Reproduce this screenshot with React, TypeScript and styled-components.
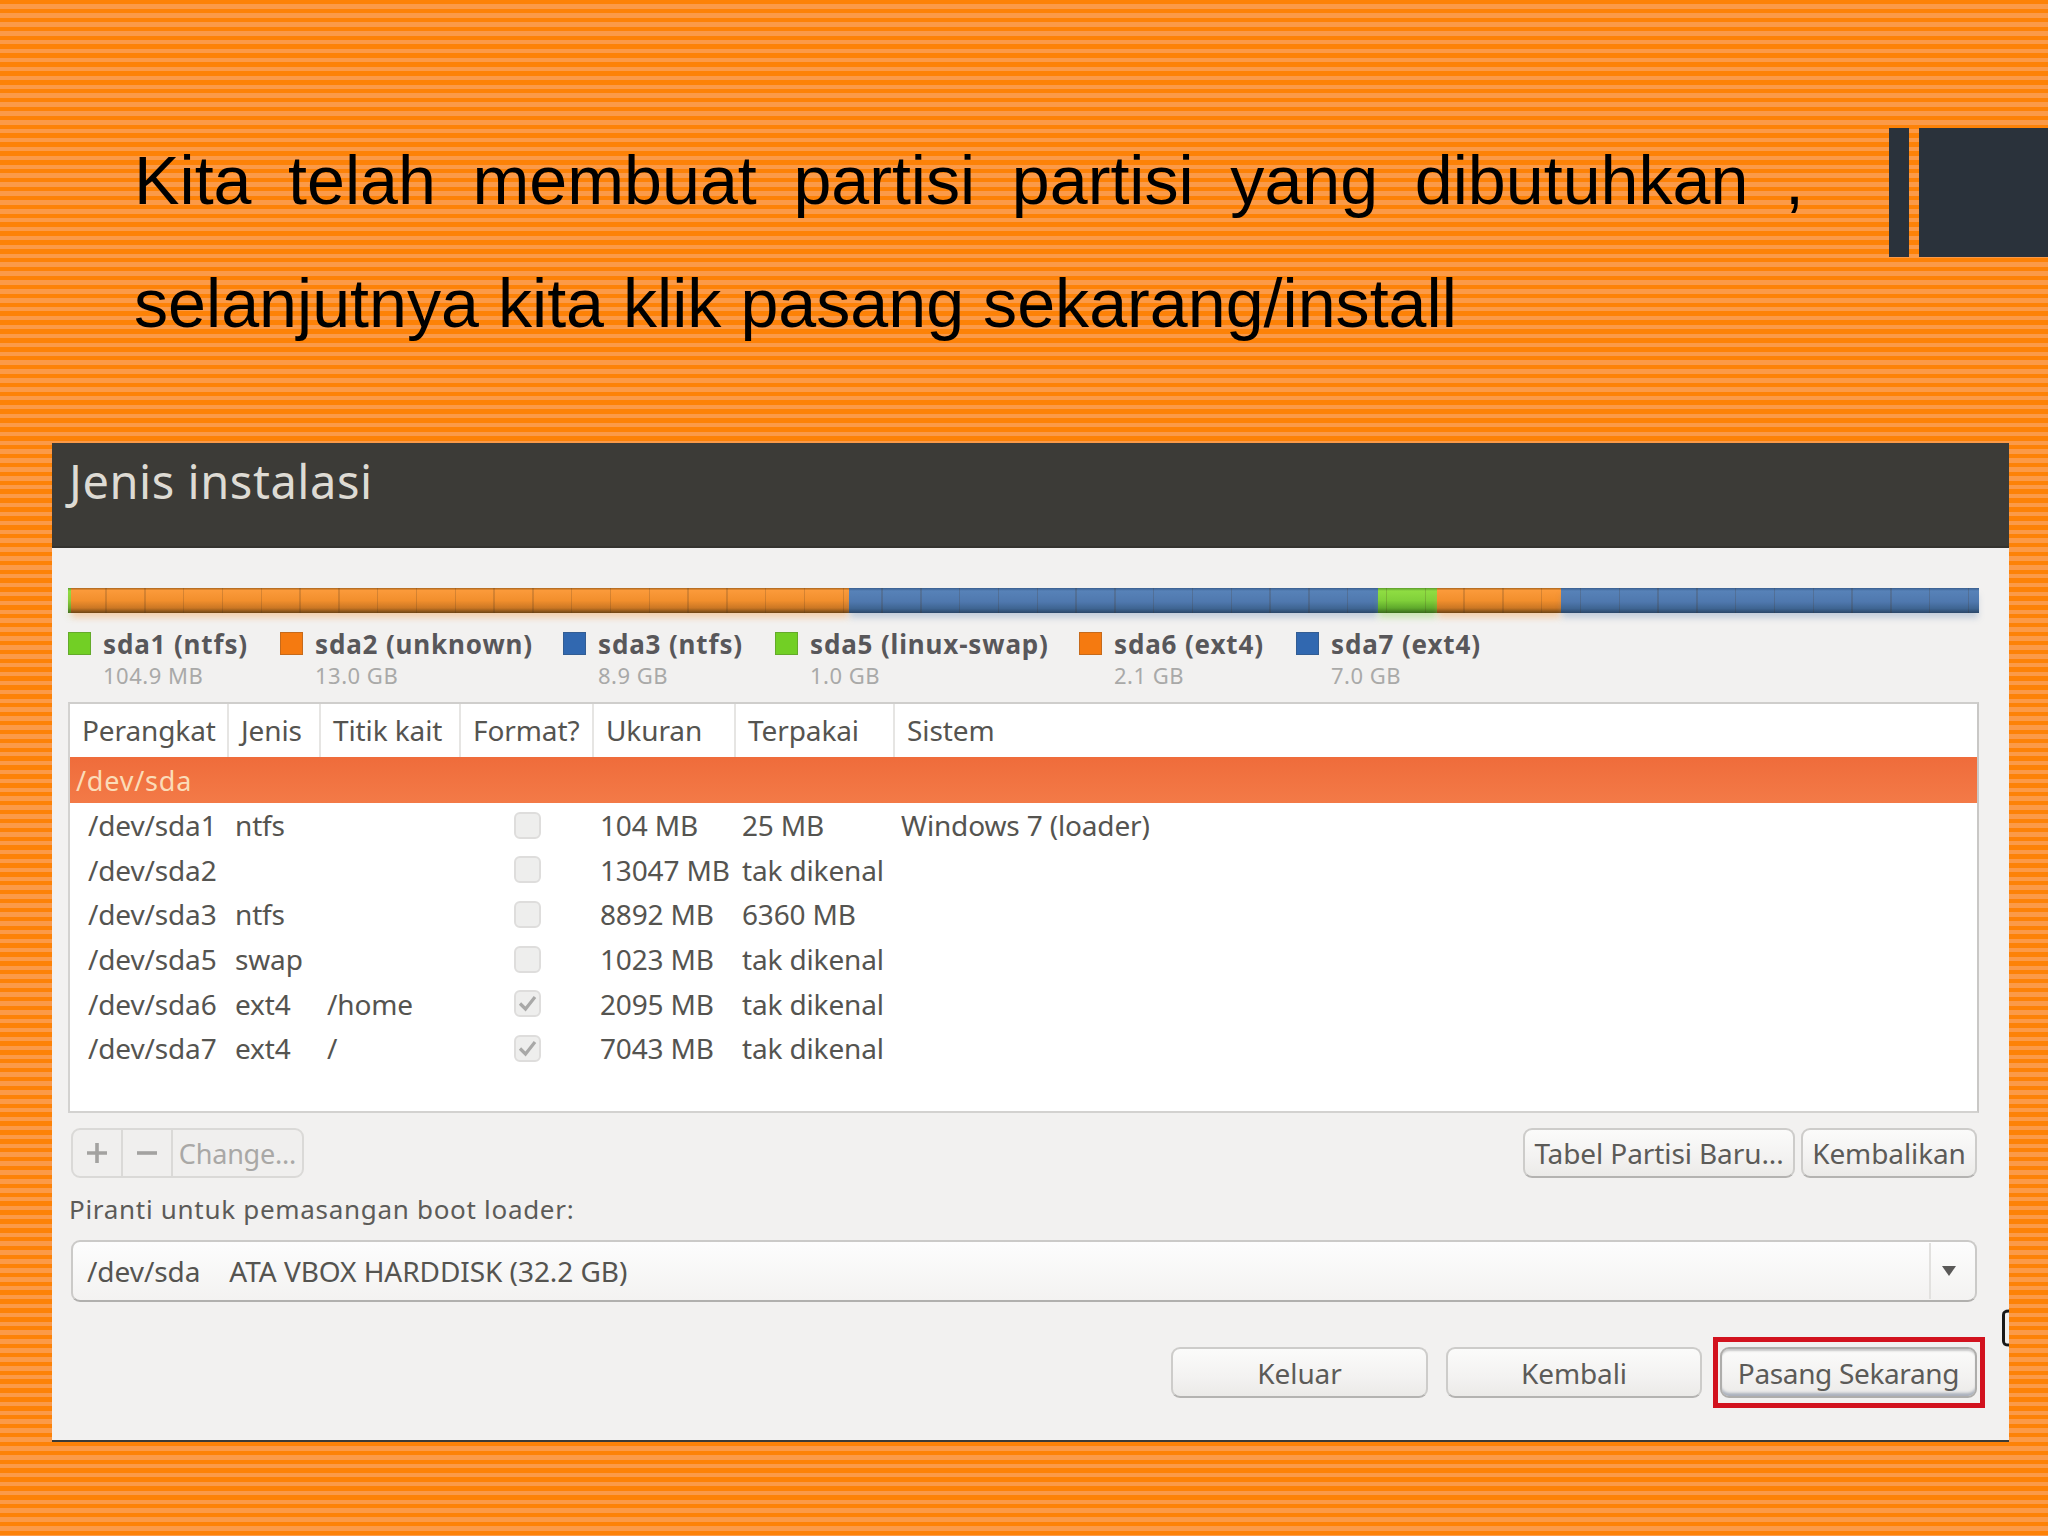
import React from "react";
import styled, { createGlobalStyle } from "styled-components";

const Global = createGlobalStyle`
  html, body { margin: 0; padding: 0; }
  body { width: 2048px; height: 1536px; overflow: hidden; }
`;

const Slide = styled.div`
  width: 2048px;
  height: 1536px;
  display: flex;
  flex-direction: column;
  background: repeating-linear-gradient(180deg, #fd8207 0, #fd8207 4.4px, #fb9a48 4.4px, #fb9a48 8.9px);
`;

const Header = styled.header`
  height: 443px;
  flex: none;
  display: flex;
  align-items: flex-start;
`;

const Title = styled.h1`
  margin: 119px 0 0 134px;
  width: 1670px;
  flex: none;
  font: 400 68.2px/123px "Liberation Sans", Arial, sans-serif;
  color: #000;
  text-align: justify;
`;

const Decor = styled.div`
  margin: 128px 0 0 85px;
  display: flex;
  gap: 10px;
  flex: 1;
`;

const DecorBlock = styled.div<{ $w: number }>`
  flex: ${(p) => (p.$w ? `0 0 ${p.$w}px` : "1")};
  height: 129px;
  background: #2a323b;
`;

const Window = styled.section`
  position: relative;
  margin-left: 52px;
  width: 1957px;
  height: 999px;
  display: flex;
  flex-direction: column;
  background: #f2f1f0;
  border-bottom: 2px solid #3c3b37;
  box-sizing: border-box;
  font-family: "Noto Sans", sans-serif;
  color: #555450;
`;

const WindowHead = styled.div`
  height: 105px;
  flex: none;
  box-sizing: border-box;
  padding: 6px 0 0 17px;
  background: #3c3b37;
  border-bottom: 2px solid #34332f;
  color: #dedbd4;
  font-size: 47px;
  line-height: 64px;
  letter-spacing: 0.55px;
`;

const WindowBody = styled.div`
  flex: 1;
  padding: 40px 30px 0 16px;
  display: flex;
  flex-direction: column;
`;

const Bar = styled.div`
  position: relative;
  width: 1911px;
  height: 25px;
  display: flex;
  flex: none;
  &::after {
    content: "";
    position: absolute;
    inset: 0;
    background: repeating-linear-gradient(90deg, transparent 0, transparent 37.3px, rgba(70, 50, 30, 0.2) 37.3px, rgba(70, 50, 30, 0.2) 38.8px);
  }
`;

const Segment = styled.div<{ $w: number; $kind: string }>`
  flex: 0 0 ${(p) => p.$w}px;
  background: ${(p) =>
    p.$kind === "o"
      ? "linear-gradient(180deg, #a9651f 0, #fb9a3a 10%, #f28f2d 50%, #cb7724 80%, #6e4414 100%)"
      : p.$kind === "b"
      ? "linear-gradient(180deg, #3a5f8f 0, #5782b8 12%, #4f78ae 55%, #3f6592 82%, #2a4668 100%)"
      : "linear-gradient(180deg, #5c9c2c 0, #8fdd42 12%, #80d03a 50%, #5faa2c 80%, #3a6c1c 100%)"};
  box-shadow: 0 6px 6px -1px ${(p) =>
    p.$kind === "o"
      ? "rgba(245, 160, 80, 0.4)"
      : p.$kind === "b"
      ? "rgba(110, 140, 180, 0.35)"
      : "rgba(130, 210, 70, 0.35)"};
`;

const Legend = styled.div`
  display: grid;
  grid-template-columns: 212px 283px 212px 304px 217px auto;
  margin-top: 19px;
  height: 71px;
  flex: none;
`;

const LegendItem = styled.div`
  display: grid;
  grid-template-columns: 24px auto;
  column-gap: 11px;
  align-content: start;
`;

const Swatch = styled.span<{ $c: string }>`
  width: 23px;
  height: 23px;
  box-sizing: border-box;
  background: ${(p) => p.$c};
  border: 1px solid rgba(60, 60, 60, 0.25);
`;

const LegendName = styled.span`
  font-size: 26px;
  font-weight: 700;
  line-height: 25px;
  letter-spacing: 0.85px;
  color: #58575a;
  white-space: nowrap;
`;

const LegendSize = styled.span`
  grid-column: 2;
  font-size: 22px;
  line-height: 36px;
  letter-spacing: 0.5px;
  color: #a9a9a8;
`;

const Table = styled.div`
  width: 1911px;
  height: 411px;
  flex: none;
  box-sizing: border-box;
  margin-top: -1px;
  background: #fff;
  border: 2px solid #d3d2d0;
  border-right-color: #c9c8c6;
  border-top-color: #cfcecc;
`;

const columns = "159px 92px 140px 133px 142px 159px 1fr";

const HeadRow = styled.div`
  height: 53px;
  display: grid;
  grid-template-columns: ${columns};
  background: #fff;
`;

const HeadCell = styled.div`
  padding-left: 12px;
  font-size: 28px;
  line-height: 52px;
  letter-spacing: -0.1px;
  white-space: nowrap;
  border-right: 2px solid #e6e5e3;
  &:last-child { border-right: 0; }
`;

const DiskRow = styled.div`
  height: 46px;
  padding-left: 6px;
  box-sizing: border-box;
  background: linear-gradient(180deg, #ef6c3b 0, #f37a47 100%);
  color: #fbdcb8;
  font-size: 27px;
  line-height: 47px;
  letter-spacing: 0.8px;
`;

const Row = styled.div`
  height: 44.6px;
  display: grid;
  grid-template-columns: ${columns};
  align-items: center;
  font-size: 28px;
  letter-spacing: -0.15px;
  color: #555450;
`;

const Cell = styled.div`
  padding-left: 6px;
  white-space: nowrap;
  &:first-child { padding-left: 18px; }
`;

const CheckCell = styled.div`
  display: flex;
  justify-content: center;
`;

const Check = styled.span`
  width: 27px;
  height: 27px;
  box-sizing: border-box;
  display: flex;
  align-items: center;
  justify-content: center;
  border: 2px solid #dedddc;
  border-radius: 6px;
  background: #eeeeed;
`;

const ToolRow = styled.div`
  display: flex;
  justify-content: space-between;
  align-items: center;
  height: 50px;
  flex: none;
  margin: 15px 2px 0 3px;
`;

const Segmented = styled.div`
  display: flex;
  height: 50px;
  box-sizing: border-box;
  border: 2px solid #dad9d7;
  border-radius: 9px;
  background: #f0efee;
`;

const SegBtn = styled.div<{ $w: number }>`
  width: ${(p) => p.$w}px;
  box-sizing: border-box;
  display: flex;
  align-items: center;
  justify-content: center;
  font-size: 27px;
  letter-spacing: -0.2px;
  color: #a9a8a6;
  border-right: 2px solid #dad9d7;
  &:last-child { border-right: 0; }
`;

const ToolGroup = styled.div`
  display: flex;
  gap: 6px;
`;

const Button = styled.div<{ $w: number; $h?: number }>`
  width: ${(p) => p.$w}px;
  height: ${(p) => p.$h || 50}px;
  box-sizing: border-box;
  display: flex;
  align-items: center;
  justify-content: center;
  white-space: nowrap;
  font-size: 28px;
  letter-spacing: -0.1px;
  color: #5c5b58;
  border: 2px solid #cdccca;
  border-bottom-color: #b4b3b1;
  border-radius: 9px;
  background: linear-gradient(180deg, #fbfbfa 0, #f3f2f1 60%, #ebeae8 100%);
`;

const DefaultButton = styled(Button)`
  position: relative;
  letter-spacing: -0.35px;
  border-color: #aeadab;
  box-shadow: inset 0 -5px 3px -2px #a9afbb, inset 0 3px 2px -1px #c8c8c8;
  &::after {
    content: "";
    position: absolute;
    left: -9px;
    top: -12px;
    width: 272px;
    height: 71px;
    box-sizing: border-box;
    border: 5px solid #d2121e;
  }
`;

const BootLabel = styled.div`
  margin: 16px 0 0 1px;
  height: 31px;
  flex: none;
  font-size: 26px;
  line-height: 31px;
  letter-spacing: 0.7px;
  color: #5c5b58;
`;

const Select = styled.div`
  margin: 15px 2px 0 3px;
  height: 62px;
  flex: none;
  box-sizing: border-box;
  display: flex;
  align-items: center;
  border: 2px solid #cbcac8;
  border-bottom-color: #b1b0ae;
  border-radius: 9px;
  background: linear-gradient(180deg, #fdfdfd 0, #f3f2f1 100%);
  font-size: 28px;
  letter-spacing: -0.05px;
  color: #555450;
`;

const SelectValue = styled.div`
  flex: 1;
  padding-left: 14px;
  white-space: pre;
`;

const SelectArrow = styled.div`
  width: 46px;
  height: 56px;
  box-sizing: border-box;
  padding-right: 8px;
  display: flex;
  align-items: center;
  justify-content: center;
  border-left: 2px solid #e2e1df;
  color: #5a5958;
`;

const ActionRow = styled.div`
  margin: 45px 2px 0 0;
  display: flex;
  justify-content: flex-end;
  gap: 18px;
`;

const Cursor = styled.svg`
  position: absolute;
  left: 1947px;
  top: 866px;
`;

const legend = [
  { c: "#72cf25", n: "sda1 (ntfs)", s: "104.9 MB" },
  { c: "#f57a10", n: "sda2 (unknown)", s: "13.0 GB" },
  { c: "#3168b0", n: "sda3 (ntfs)", s: "8.9 GB" },
  { c: "#72cf25", n: "sda5 (linux-swap)", s: "1.0 GB" },
  { c: "#f57a10", n: "sda6 (ext4)", s: "2.1 GB" },
  { c: "#3168b0", n: "sda7 (ext4)", s: "7.0 GB" },
];

const segments = [
  { w: 3, k: "g" },
  { w: 778, k: "o" },
  { w: 529, k: "b" },
  { w: 59, k: "g" },
  { w: 124, k: "o" },
  { w: 418, k: "b" },
];

const heads = ["Perangkat", "Jenis", "Titik kait", "Format?", "Ukuran", "Terpakai", "Sistem"];

const rows = [
  ["/dev/sda1", "ntfs", "", false, "104 MB", "25 MB", "Windows 7 (loader)"],
  ["/dev/sda2", "", "", false, "13047 MB", "tak dikenal", ""],
  ["/dev/sda3", "ntfs", "", false, "8892 MB", "6360 MB", ""],
  ["/dev/sda5", "swap", "", false, "1023 MB", "tak dikenal", ""],
  ["/dev/sda6", "ext4", "/home", true, "2095 MB", "tak dikenal", ""],
  ["/dev/sda7", "ext4", "/", true, "7043 MB", "tak dikenal", ""],
] as const;

export default function App() {
  return (
    <Slide>
      <Global />
      <Header>
        <Title>
          Kita telah membuat partisi partisi yang dibutuhkan , selanjutnya kita klik pasang sekarang/install
        </Title>
        <Decor>
          <DecorBlock $w={20} />
          <DecorBlock $w={0} />
        </Decor>
      </Header>
      <Window>
        <WindowHead>Jenis instalasi</WindowHead>
        <WindowBody>
          <Bar>
            {segments.map((s, i) => (
              <Segment key={i} $w={s.w} $kind={s.k} />
            ))}
          </Bar>
          <Legend>
            {legend.map((l) => (
              <LegendItem key={l.n}>
                <Swatch $c={l.c} />
                <LegendName>{l.n}</LegendName>
                <LegendSize>{l.s}</LegendSize>
              </LegendItem>
            ))}
          </Legend>
          <Table>
            <HeadRow>
              {heads.map((h) => (
                <HeadCell key={h}>{h}</HeadCell>
              ))}
            </HeadRow>
            <DiskRow>/dev/sda</DiskRow>
            {rows.map((r) => (
              <Row key={r[0]}>
                <Cell>{r[0]}</Cell>
                <Cell>{r[1]}</Cell>
                <Cell>{r[2]}</Cell>
                <CheckCell>
                  <Check>
                    {r[3] && (
                      <svg width="21" height="21" viewBox="0 0 21 21" fill="none">
                        <path d="M3 10.5 L8.5 16 L18 4" stroke="#a8a8a7" strokeWidth="3.2" />
                      </svg>
                    )}
                  </Check>
                </CheckCell>
                <Cell>{r[4]}</Cell>
                <Cell>{r[5]}</Cell>
                <Cell>{r[6]}</Cell>
              </Row>
            ))}
          </Table>
          <ToolRow>
            <Segmented>
              <SegBtn $w={50}>
                <svg width="24" height="24" viewBox="0 0 24 24">
                  <path d="M12 2 V22 M2 12 H22" stroke="#a3a2a0" strokeWidth="3.6" />
                </svg>
              </SegBtn>
              <SegBtn $w={50}>
                <svg width="24" height="24" viewBox="0 0 24 24">
                  <path d="M2 12 H22" stroke="#a3a2a0" strokeWidth="3.6" />
                </svg>
              </SegBtn>
              <SegBtn $w={129}>Change...</SegBtn>
            </Segmented>
            <ToolGroup>
              <Button $w={272}>Tabel Partisi Baru...</Button>
              <Button $w={176}>Kembalikan</Button>
            </ToolGroup>
          </ToolRow>
          <BootLabel>Piranti untuk pemasangan boot loader:</BootLabel>
          <Select>
            <SelectValue>{"/dev/sda    ATA VBOX HARDDISK (32.2 GB)"}</SelectValue>
            <SelectArrow>
              <svg width="16" height="12" viewBox="0 0 16 12">
                <path d="M1 1 H15 L8 11 Z" fill="#5a5958" />
              </svg>
            </SelectArrow>
          </Select>
          <ActionRow>
            <Button $w={257} $h={51}>Keluar</Button>
            <Button $w={256} $h={51}>Kembali</Button>
            <DefaultButton $w={257} $h={51}>Pasang Sekarang</DefaultButton>
          </ActionRow>
        </WindowBody>
        <Cursor width="12" height="38" viewBox="0 0 12 38" fill="none">
          <path d="M10 2 C6 2 4.5 3 4.5 6 V32 C4.5 35 6 36 10 36" stroke="#1a1a1a" strokeWidth="3" />
        </Cursor>
      </Window>
    </Slide>
  );
}
